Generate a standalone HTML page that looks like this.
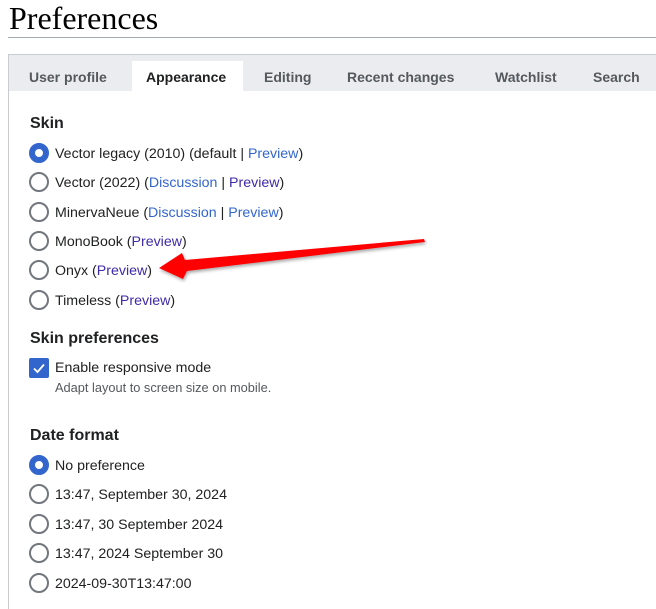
<!DOCTYPE html>
<html><head><style>
html,body{margin:0;width:656px;height:609px;overflow:hidden}
body{background:#fff;font-family:"Liberation Sans",Arial,sans-serif;color:#202122;position:relative}
.a{position:absolute;white-space:nowrap}
h1{position:absolute;left:9px;top:0;margin:0;font:normal 32px "Liberation Serif",serif;color:#000;line-height:36px}
.rule{position:absolute;left:8px;top:37px;width:648px;height:1px;background:#a2a9b1}
.panel{position:absolute;left:8px;top:54px;width:647px;height:560px;border-left:1px solid #c8ccd1;border-top:1px solid #c8ccd1}
.tabs{position:absolute;left:9px;top:55px;width:647px;height:36px;background:#eaecf0}
.tab{position:absolute;top:69px;font-weight:bold;font-size:14px;color:#54595d}
.act{position:absolute;left:132px;top:61px;width:111px;height:30px;background:#fff}
.h{position:absolute;left:30px;font-weight:bold;font-size:16px}
.r{position:absolute;left:29px;width:16px;height:16px;border:2px solid #72777d;border-radius:50%;background:#fff}
.r.on{border:6px solid #3366cc;width:8px;height:8px}
.t{position:absolute;left:55px;font-size:14.2px}
a{color:#3366cc;text-decoration:none}
a.v{color:#3f2aa8}
</style></head><body>
<h1>Preferences</h1>
<div class="rule"></div>
<div class="panel"></div>
<div class="tabs"></div>
<div class="act"></div>
<div class="tab" style="left:29px">User profile</div>
<div class="tab" style="left:146px;color:#202122">Appearance</div>
<div class="tab" style="left:264px">Editing</div>
<div class="tab" style="left:347px">Recent changes</div>
<div class="tab" style="left:495px">Watchlist</div>
<div class="tab" style="left:593px">Search</div>

<div class="h" style="top:115px">Skin</div>
<div class="r on" style="top:143px"></div><div class="t" style="top:146px">Vector legacy (2010) (default | <a>Preview</a>)</div>
<div class="r" style="top:172px"></div><div class="t" style="top:175px">Vector (2022) (<a>Discussion</a> | <a class="v">Preview</a>)</div>
<div class="r" style="top:202px"></div><div class="t" style="top:205px">MinervaNeue (<a>Discussion</a> | <a>Preview</a>)</div>
<div class="r" style="top:231px"></div><div class="t" style="top:234px">MonoBook (<a class="v">Preview</a>)</div>
<div class="r" style="top:260px"></div><div class="t" style="top:263px">Onyx (<a class="v">Preview</a>)</div>
<div class="r" style="top:290px"></div><div class="t" style="top:293px">Timeless (<a class="v">Preview</a>)</div>

<div class="h" style="top:330px">Skin preferences</div>
<div class="a" style="left:29px;top:358px;width:20px;height:20px;background:#3366cc;border-radius:2px">
<svg width="20" height="20"><path d="M5 10.5 L8.5 14 L15 6.5" stroke="#fff" stroke-width="1.8" fill="none"/></svg></div>
<div class="t" style="top:360px">Enable responsive mode</div>
<div class="t" style="top:380px;font-size:12.8px;color:#54595d">Adapt layout to screen size on mobile.</div>

<div class="h" style="top:427px">Date format</div>
<div class="r on" style="top:455px"></div><div class="t" style="top:458px">No preference</div>
<div class="r" style="top:484px"></div><div class="t" style="top:487px">13:47, September 30, 2024</div>
<div class="r" style="top:514px"></div><div class="t" style="top:517px">13:47, 30 September 2024</div>
<div class="r" style="top:543px"></div><div class="t" style="top:546px">13:47, 2024 September 30</div>
<div class="r" style="top:573px"></div><div class="t" style="top:576px">2024-09-30T13:47:00</div>

<svg class="a" style="left:0;top:0" width="656" height="609">
<defs><filter id="s"><feDropShadow dx="1" dy="2" stdDeviation="1.5" flood-opacity="0.35"/></filter></defs>
<path d="M159 268 L182 253 L185 260 L424 239 L425 242 L187 271 L183 279 Z" fill="#f00" filter="url(#s)"/>
</svg>
</body></html>
